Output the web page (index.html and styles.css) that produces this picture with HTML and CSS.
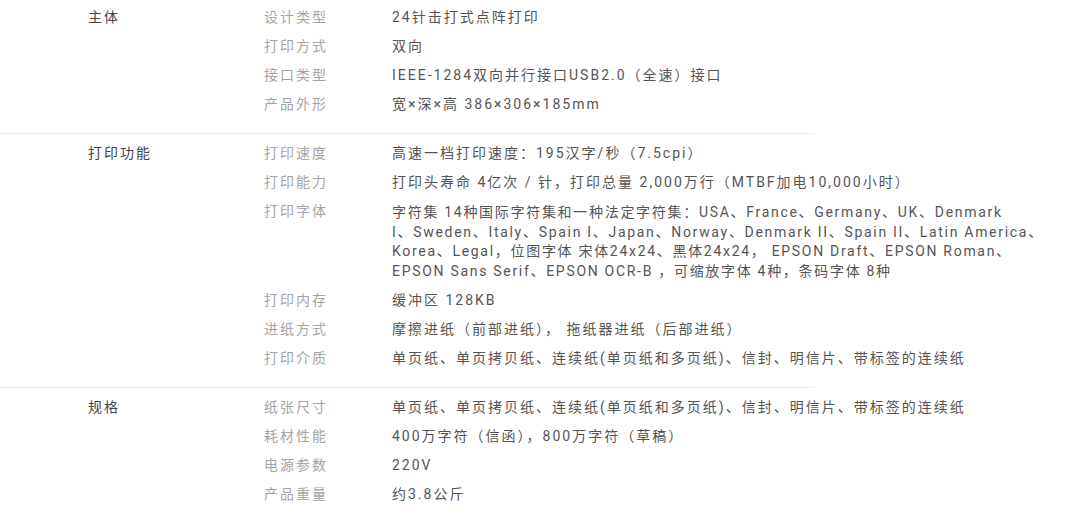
FILE: index.html
```html
<!DOCTYPE html>
<html lang="zh-CN">
<head>
    <meta charset="UTF-8">
    <meta name="viewport" content="width=device-width, initial-scale=1.0">
    <title>规格参数</title>
    <link rel="stylesheet" href="styles.css">
</head>
<body>
    <div class="spec">
        <div class="spec-group first">
            <div class="spec-title">主体</div>
            <dl class="spec-list">
                <div class="spec-row"><dt>设计类型</dt><dd>24针击打式点阵打印</dd></div>
                <div class="spec-row"><dt>打印方式</dt><dd>双向</dd></div>
                <div class="spec-row"><dt>接口类型</dt><dd>IEEE-1284双向并行接口USB2.0（全速）接口</dd></div>
                <div class="spec-row"><dt>产品外形</dt><dd>宽×深×高 386×306×185mm</dd></div>
            </dl>
        </div>
        <div class="divider"></div>

        <div class="spec-group">
            <div class="spec-title">打印功能</div>
            <dl class="spec-list">
                <div class="spec-row"><dt>打印速度</dt><dd>高速一档打印速度：195汉字/秒（7.5cpi）</dd></div>
                <div class="spec-row"><dt>打印能力</dt><dd>打印头寿命 4亿次 / 针，打印总量 2,000万行（MTBF加电10,000小时）</dd></div>
                <div class="spec-row tall"><dt>打印字体</dt><dd class="long">字符集 14种国际字符集和一种法定字符集：USA、France、Germany、UK、Denmark<br>I、Sweden、Italy、Spain I、Japan、Norway、Denmark II、Spain II、Latin America、<br>Korea、Legal，位图字体 宋体24x24、黑体24x24， EPSON Draft、EPSON Roman、<br>EPSON Sans Serif、EPSON OCR-B ，可缩放字体 4种，条码字体 8种</dd></div>
                <div class="spec-row"><dt>打印内存</dt><dd>缓冲区 128KB</dd></div>
                <div class="spec-row"><dt>进纸方式</dt><dd>摩擦进纸（前部进纸）， 拖纸器进纸（后部进纸）</dd></div>
                <div class="spec-row"><dt>打印介质</dt><dd>单页纸、单页拷贝纸、连续纸(单页纸和多页纸)、信封、明信片、带标签的连续纸</dd></div>
            </dl>
        </div>
        <div class="divider"></div>

        <div class="spec-group">
            <div class="spec-title">规格</div>
            <dl class="spec-list">
                <div class="spec-row"><dt>纸张尺寸</dt><dd>单页纸、单页拷贝纸、连续纸(单页纸和多页纸)、信封、明信片、带标签的连续纸</dd></div>
                <div class="spec-row"><dt>耗材性能</dt><dd>400万字符（信函），800万字符（草稿）</dd></div>
                <div class="spec-row"><dt>电源参数</dt><dd>220V</dd></div>
                <div class="spec-row"><dt>产品重量</dt><dd>约3.8公斤</dd></div>
            </dl>
        </div>
    </div>
</body>
</html>
```

FILE: styles.css
```css
body {
    margin: 0;
    background-color: #fff;
    font-family: Roboto, "Noto Sans CJK SC", sans-serif;
    font-size: 14px;
    letter-spacing: 2px;
}

.spec-group {
    display: flex;
    padding: 5px 0 14px 88px;
}

.spec-group.first {
    padding-top: 3px;
}

.spec-title {
    width: 176px;
    flex-shrink: 0;
    padding-top: 5px;
    line-height: 19.5px;
    color: #444;
}

.spec-list {
    margin: 0;
}

.spec-row {
    display: flex;
    padding: 5px 0 4.5px;
    line-height: 19.5px;
}

.spec-row.tall {
    padding-top: 6px;
}

.spec-row.tall dt {
    margin-top: -1px;
}

.spec-row dt {
    width: 128px;
    flex-shrink: 0;
    color: #a5a5a5;
}

.spec-row dd {
    width: 640px;
    margin: 0;
    color: #555;
}

.spec-row dd.long {
    white-space: nowrap;
    letter-spacing: 1.7px;
}

.divider {
    width: 815px;
    height: 1px;
    background-color: #ececec;
}
```
